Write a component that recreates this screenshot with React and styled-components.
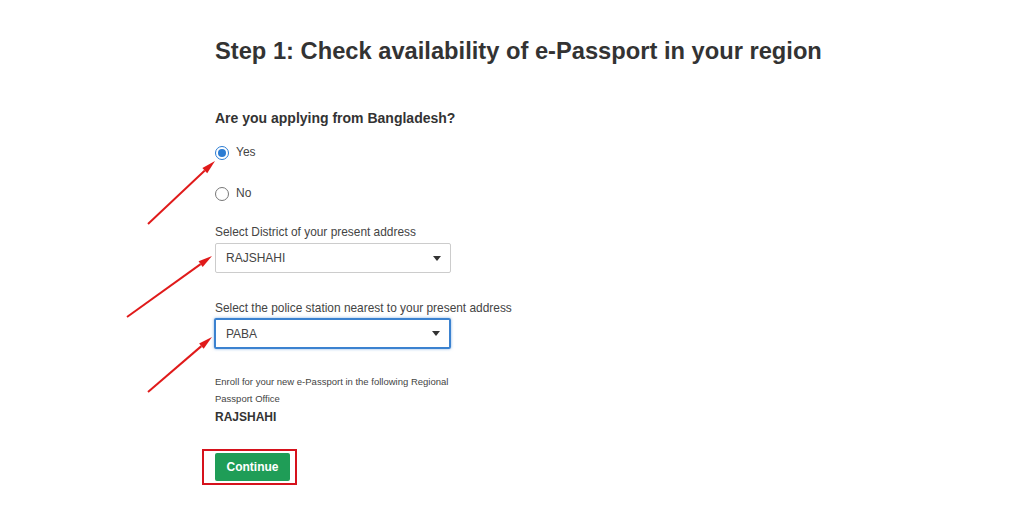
import React from 'react';
import styled, {createGlobalStyle} from 'styled-components';

const GlobalStyle = createGlobalStyle`
  html, body {
    margin: 0;
    padding: 0;
    background: #fff;
  }
  body {
    font-family: "Liberation Sans", Arial, sans-serif;
    color: #333;
  }
`;

const Page = styled.div`
  position: relative;
  width: 1024px;
  height: 506px;
  overflow: hidden;
`;

const Main = styled.div`
  width: 594px;
  margin: 0 auto;
  padding-top: 36px;
  display: flex;
  flex-direction: column;
  align-items: flex-start;
`;

const Title = styled.h1`
  margin: 0;
  font-size: 23.7px;
  line-height: 30px;
  font-weight: bold;
  color: #333;
  white-space: nowrap;
`;

const Question = styled.div`
  margin-top: 43px;
  font-size: 14px;
  line-height: 18px;
  font-weight: bold;
  color: #333;
`;

const RadioGroup = styled.div`
  display: flex;
  flex-direction: column;
  gap: 24px;
  margin-top: 17px;
`;

const RadioRow = styled.label`
  display: flex;
  align-items: center;
  gap: 7px;
  font-size: 12px;
  line-height: 17px;
  color: #444;
`;

const RadioCircle = styled.span`
  box-sizing: border-box;
  width: 14px;
  height: 14px;
  border-radius: 50%;
  border: 1px solid ${p => (p.$checked ? '#2b7cd3' : '#777')};
  display: flex;
  align-items: center;
  justify-content: center;
  &::after {
    content: '';
    width: 8px;
    height: 8px;
    border-radius: 50%;
    background: ${p => (p.$checked ? '#2b7cd3' : 'transparent')};
  }
`;

const FieldLabel = styled.div`
  margin-top: ${p => p.$top}px;
  font-size: 11.9px;
  line-height: 16px;
  color: #444;
`;

const Select = styled.div`
  box-sizing: border-box;
  margin-top: ${p => (p.$focused ? 2 : 3)}px;
  width: ${p => (p.$focused ? 237 : 236)}px;
  height: ${p => (p.$focused ? 31 : 30)}px;
  display: flex;
  align-items: center;
  justify-content: space-between;
  padding: 0 9px 0 10px;
  border: ${p => (p.$focused ? '2px solid #3b82d0' : '1px solid #ccc')};
  border-radius: 2px;
  box-shadow: ${p => (p.$focused ? '0 0 3px rgba(59,130,208,0.6)' : 'none')};
  font-size: 12px;
  color: #444;
  margin-left: ${p => (p.$focused ? '-1px' : '0')};
`;

const Caret = styled.span`
  width: 0;
  height: 0;
  border-left: 4px solid transparent;
  border-right: 4px solid transparent;
  border-top: 5px solid #333;
`;

const Note = styled.div`
  margin-top: 24px;
  width: 240px;
  font-size: 9.5px;
  line-height: 17px;
  color: #444;
`;

const Office = styled.div`
  margin-top: 2px;
  font-size: 12px;
  line-height: 16px;
  font-weight: bold;
  color: #333;
`;

const ButtonWrap = styled.div`
  position: relative;
  margin-top: 28px;
`;

const Button = styled.button`
  width: 75px;
  height: 28px;
  border: none;
  border-radius: 2px;
  background: #1f9d57;
  color: #fff;
  font-family: "Liberation Sans", Arial, sans-serif;
  font-size: 12px;
  font-weight: bold;
  padding: 0;
`;

const Highlight = styled.span`
  position: absolute;
  left: -13px;
  top: -4px;
  width: 95px;
  height: 36px;
  box-sizing: border-box;
  border: 2px solid #d6121c;
  pointer-events: none;
`;

const Annotations = styled.svg`
  position: absolute;
  left: 0;
  top: 0;
  pointer-events: none;
`;

function Arrow({x1, y1, x2, y2}) {
  const a = Math.atan2(y2 - y1, x2 - x1);
  const len = 14;
  const w = 3.5;
  const bx = x2 - len * Math.cos(a);
  const by = y2 - len * Math.sin(a);
  const px = -Math.sin(a) * w;
  const py = Math.cos(a) * w;
  return (
    <g>
      <line x1={x1} y1={y1} x2={bx} y2={by} stroke="#e01a1a" strokeWidth="2" />
      <polygon points={`${x2},${y2} ${bx + px},${by + py} ${bx - px},${by - py}`} fill="#e01a1a" />
    </g>
  );
}

export default function App() {
  return (
    <Page>
      <GlobalStyle />
      <Main>
        <Title>Step 1: Check availability of e-Passport in your region</Title>
        <Question>Are you applying from Bangladesh?</Question>
        <RadioGroup>
          <RadioRow><RadioCircle $checked />Yes</RadioRow>
          <RadioRow><RadioCircle />No</RadioRow>
        </RadioGroup>
        <FieldLabel $top={22}>Select District of your present address</FieldLabel>
        <Select>RAJSHAHI<Caret /></Select>
        <FieldLabel $top={27}>Select the police station nearest to your present address</FieldLabel>
        <Select $focused>PABA<Caret /></Select>
        <Note>Enroll for your new e-Passport in the following Regional Passport Office</Note>
        <Office>RAJSHAHI</Office>
        <ButtonWrap>
          <Button>Continue</Button>
          <Highlight />
        </ButtonWrap>
      </Main>
      <Annotations width="1024" height="506">
        <Arrow x1={148} y1={224} x2={215} y2={161} />
        <Arrow x1={127} y1={317} x2={212} y2={256} />
        <Arrow x1={148} y1={392} x2={212} y2={337} />
      </Annotations>
    </Page>
  );
}
